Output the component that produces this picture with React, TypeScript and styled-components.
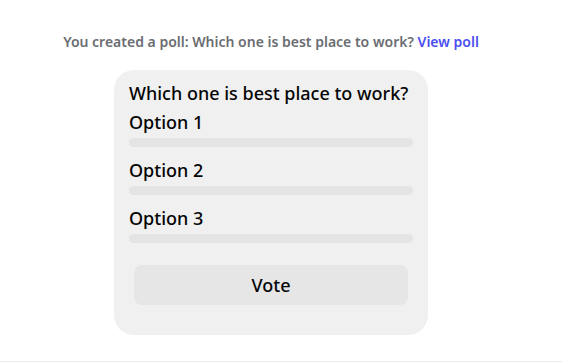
import React from "react";
import styled, { createGlobalStyle } from "styled-components";

const GlobalStyle = createGlobalStyle`
  body {
    margin: 0;
    background: #ffffff;
    font-family: "Noto Sans", "Open Sans", sans-serif;
  }
`;

const Page = styled.div`
  width: 562px;
  height: 362px;
  box-sizing: border-box;
  display: flex;
  flex-direction: column;
  align-items: center;
  padding: 32px 20px 0 0;
  border-bottom: 1px solid #ececec;
`;

const Notice = styled.p`
  margin: 0;
  font-size: 14px;
  line-height: 20px;
  font-weight: 600;
  color: #6a6d72;
`;

const ViewLink = styled.a`
  color: #4b4ef0;
  text-decoration: none;
  cursor: pointer;
`;

const Card = styled.div`
  margin-top: 18px;
  width: 314px;
  box-sizing: border-box;
  background: #f0f0f0;
  border-radius: 20px;
  padding: 11px 15px 30px;
`;

const Title = styled.h3`
  margin: 0 0 5px;
  font-size: 18px;
  line-height: 24px;
  font-weight: 500;
  color: #050505;
`;

const Option = styled.div`
  margin-bottom: 11px;
`;

const OptionLabel = styled.div`
  font-size: 18px;
  line-height: 24px;
  font-weight: 500;
  color: #050505;
`;

const Bar = styled.div`
  margin-top: 4px;
  height: 9px;
  border-radius: 5px;
  background: #e4e4e4;
`;

const VoteButton = styled.button`
  display: block;
  width: calc(100% - 10px);
  margin: 22px 5px 0;
  height: 40px;
  border: none;
  border-radius: 8px;
  background: #e6e6e6;
  font-family: inherit;
  font-size: 18px;
  font-weight: 500;
  color: #050505;
  cursor: pointer;
`;

const options = ["Option 1", "Option 2", "Option 3"];

export default function App() {
  return (
    <>
      <GlobalStyle />
      <Page>
        <Notice>
          You created a poll: Which one is best place to work?{" "}
          <ViewLink>View poll</ViewLink>
        </Notice>
        <Card>
          <Title>Which one is best place to work?</Title>
          {options.map((o) => (
            <Option key={o}>
              <OptionLabel>{o}</OptionLabel>
              <Bar />
            </Option>
          ))}
          <VoteButton>Vote</VoteButton>
        </Card>
      </Page>
    </>
  );
}
